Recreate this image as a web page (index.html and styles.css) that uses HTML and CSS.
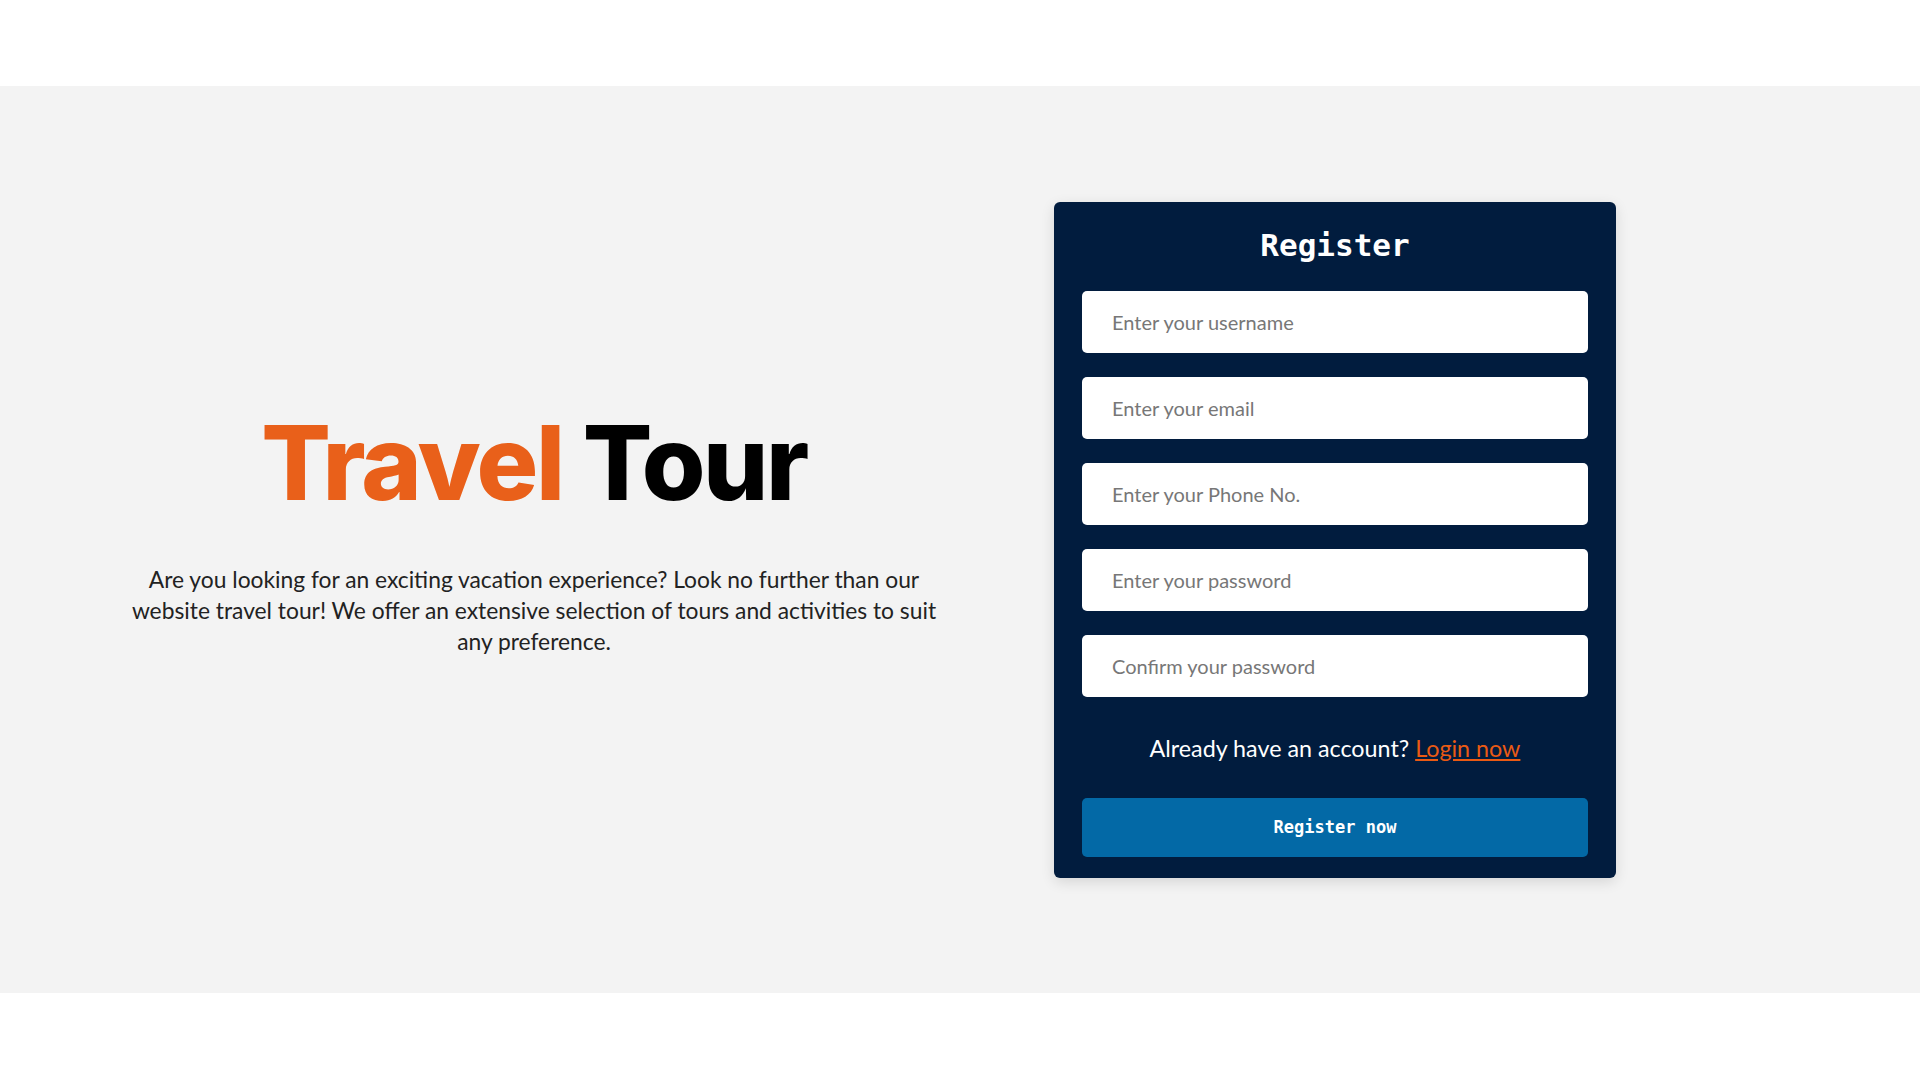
FILE: index.html
```html
<!DOCTYPE html>
<html lang="en">
<head>
<meta charset="utf-8">
<title>Travel Tour - Register</title>
<link rel="stylesheet" href="styles.css">
</head>
<body>
<header class="top"></header>
<main class="hero">
  <section class="intro">
    <h1 class="brand"><span class="brand-orange">Travel</span> <span class="brand-dark">Tour</span></h1>
    <p class="lead">Are you looking for an exciting vacation experience? Look no further than our<br>website travel tour! We offer an extensive selection of tours and activities to suit<br>any preference.</p>
  </section>
  <form class="card">
    <h2 class="card-title">Register</h2>
    <input class="field" type="text" placeholder="Enter your username">
    <input class="field" type="email" placeholder="Enter your email">
    <input class="field" type="text" placeholder="Enter your Phone No.">
    <input class="field" type="password" placeholder="Enter your password">
    <input class="field" type="password" placeholder="Confirm your password">
    <p class="switch">Already have an account? <a href="#" class="switch-link">Login now</a></p>
    <button class="submit" type="button">Register now</button>
  </form>
</main>
<footer class="bottom"></footer>
</body>
</html>
```
FILE: styles.css
```css
* { box-sizing: border-box; }
html, body { margin: 0; padding: 0; background: #ffffff; }
body { font-family: "Lato", "Noto Sans", sans-serif; }

.top { height: 86px; background: #ffffff; }
.bottom { height: 87px; background: #ffffff; }

.hero {
  height: 907px;
  background: #f3f3f3;
  display: flex;
  align-items: center;
  padding-left: 124px;
  gap: 110px;
}

.intro {
  width: 820px;
  text-align: center;
  margin-top: -16px;
}
.brand {
  margin: 0 0 44px;
  font-family: "Inter", "Lato", sans-serif;
  font-weight: 800;
  font-size: 103px;
  line-height: 1.1;
  letter-spacing: -2.5px;
}
.brand-orange { color: #e9601a; }
.brand-dark { color: #000000; }

.lead {
  margin: 0;
  font-family: "Lato", "Noto Sans", sans-serif;
  font-size: 22.8px;
  line-height: 31px;
  color: #222222;
}

.card {
  width: 562px;
  background: #011c3e;
  border-radius: 6px;
  box-shadow: 0 4px 14px rgba(0, 0, 0, 0.12);
  padding: 23px 28px 21px;
  display: flex;
  flex-direction: column;
}
.card-title {
  margin: 0 0 26px;
  text-align: center;
  color: #ffffff;
  font-family: "DejaVu Sans Mono", "Liberation Mono", monospace;
  font-weight: 700;
  font-size: 31px;
  line-height: 40px;
}
.field {
  height: 62px;
  border: none;
  border-radius: 5px;
  background: #ffffff;
  padding: 0 30px;
  margin: 0 0 24px;
  font-family: "Comic Sans MS", "Lato", sans-serif;
  font-size: 20px;
  color: #333333;
  outline: none;
}
.field:last-of-type { margin-bottom: 0; }
.field::placeholder { color: #777777; }

.switch {
  margin: 36px 0 35px;
  text-align: center;
  color: #ffffff;
  font-family: "Comic Sans MS", "Lato", sans-serif;
  font-size: 23.3px;
  line-height: 30px;
}
.switch-link { color: #ea5a14; text-decoration: underline; }

.submit {
  height: 59px;
  border: none;
  border-radius: 5px;
  background: #0369a6;
  color: #ffffff;
  font-family: "DejaVu Sans Mono", "Liberation Mono", monospace;
  font-weight: 700;
  font-size: 17px;
  cursor: pointer;
}
```
